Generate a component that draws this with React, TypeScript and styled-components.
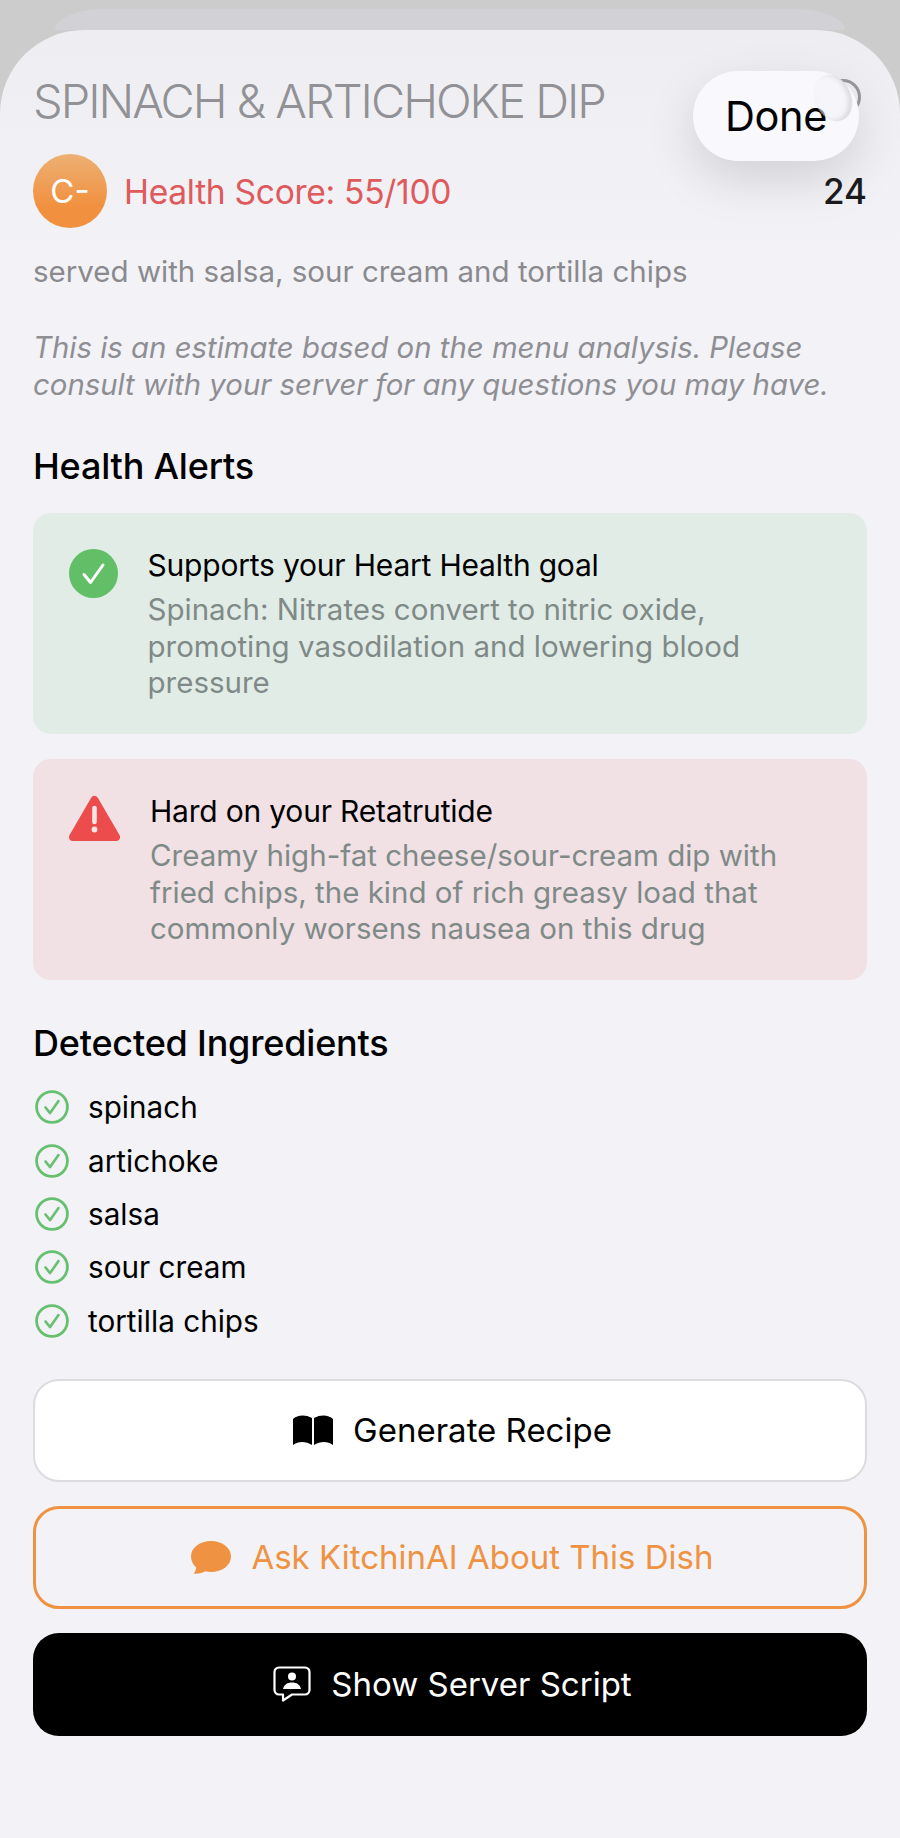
import styled, { createGlobalStyle } from 'styled-components';

const GlobalStyle = createGlobalStyle`
  html, body {
    margin: 0;
    padding: 0;
    background: #f2f2f7;
    font-family: Inter, "Liberation Sans", sans-serif;
  }
`;

const Page = styled.div`
  position: relative;
  width: 900px;
  height: 1838px;
  overflow: hidden;
  padding-top: 9px;
  box-sizing: border-box;
  background: linear-gradient(#cccccc 0, #cccccc 130px, #f2f2f7 131px);
`;

const BackSheet = styled.div`
  height: 21px;
  margin: 0 55px;
  border-radius: 50px 50px 0 0 / 21px 21px 0 0;
  background: #d2d2d6;
`;

const Sheet = styled.div`
  height: 1808px;
  padding: 0 33px;
  box-sizing: border-box;
  border-radius: 84px 84px 0 0;
  background: linear-gradient(#eeeef2, #f2f2f7 240px);
`;

const TitleRow = styled.div`
  display: flex;
  justify-content: space-between;
  padding-top: 44px;
  height: 80px;
`;

const Title = styled.h1`
  margin: 0;
  font-size: 47px;
  line-height: 54px;
  font-weight: 300;
  letter-spacing: -2px;
  white-space: nowrap;
  color: #919196;
`;

const InfoRing = styled.span`
  width: 36px;
  height: 36px;
  margin: 5px 6px 0 0;
  box-sizing: border-box;
  border: 3px solid #98989c;
  border-radius: 50%;
`;

const ScoreRow = styled.div`
  display: flex;
  align-items: center;
  gap: 17px;
  height: 74px;
`;

const Grade = styled.div`
  width: 74px;
  height: 74px;
  border-radius: 50%;
  display: flex;
  align-items: center;
  justify-content: center;
  background: linear-gradient(#edb074, #f19140 70%);
  color: #fff;
  font-size: 33px;
`;

const Score = styled.span`
  flex: 1;
  color: #de5a5c;
  font-size: 33.6px;
  letter-spacing: -0.3px;
`;

const Count = styled.span`
  color: #1c1c1e;
  font-size: 35px;
  font-weight: 500;
`;

const Subtitle = styled.p`
  margin: 24px 0 0;
  color: #8a8a8e;
  font-size: 29.5px;
  line-height: 38px;
`;

const Disclaimer = styled.p`
  margin: 40px 0 0;
  color: #8e8e93;
  font-size: 29.35px;
  line-height: 36.8px;
  font-style: italic;
`;

const SectionTitle = styled.h2`
  margin: 40.5px 0 0;
  color: #000;
  font-size: 36px;
  line-height: 44px;
  font-weight: 500;
  letter-spacing: -0.2px;
`;

const AlertCard = styled.div<{ $tone: 'good' | 'bad' }>`
  display: flex;
  align-items: flex-start;
  height: 221px;
  margin-top: 25px;
  padding: 33px 0 0 36px;
  box-sizing: border-box;
  border-radius: 18px;
  background: ${(p) => (p.$tone === 'good' ? '#e2ece6' : '#f1e0e4')};
`;

const AlertIcon = styled.svg<{ $gap: number; $top: number }>`
  flex: none;
  margin-top: ${(p) => p.$top}px;
  margin-right: ${(p) => p.$gap}px;
`;

const AlertText = styled.div`
  flex: 1;
  padding-right: 36px;
`;

const AlertTitle = styled.div`
  color: #000;
  font-size: 30px;
  line-height: 38px;
  letter-spacing: -0.2px;
`;

const AlertBody = styled.div`
  margin-top: 7px;
  color: #7f8a88;
  font-size: 29.5px;
  line-height: 36.5px;
`;

const IngredientList = styled.ul`
  list-style: none;
  margin: 16px 0 0;
  padding: 0;
`;

const Ingredient = styled.li`
  display: flex;
  align-items: center;
  gap: 19px;
  height: 53.4px;
  padding-left: 2px;
  color: #000;
  font-size: 29.7px;
`;

const ActionButton = styled.div<{ $variant: 'plain' | 'outline' | 'dark' }>`
  display: flex;
  align-items: center;
  justify-content: center;
  gap: 20px;
  height: 103px;
  margin-top: ${(p) => (p.$variant === 'plain' ? '31px' : '24px')};
  padding-left: 5px;
  box-sizing: border-box;
  border-radius: 26px;
  font-size: 33px;
  ${(p) =>
    p.$variant === 'plain' &&
    'background:#fff;color:#000;border:2px solid #dcdce0;'}
  ${(p) =>
    p.$variant === 'outline' &&
    'background:#f2f2f7;color:#ef9343;border:3px solid #ef9343;'}
  ${(p) => p.$variant === 'dark' && 'background:#000;color:#fff;'}
`;

const DoneButton = styled.div`
  position: absolute;
  left: 693px;
  top: 71px;
  width: 166px;
  height: 90px;
  border-radius: 45px;
  display: flex;
  align-items: center;
  justify-content: center;
  background: #f9f9fd;
  box-shadow: 0 18px 50px rgba(0, 0, 0, 0.13);
  color: #000;
  font-size: 41.5px;
  letter-spacing: -0.4px;
`;

const Glint = styled.span`
  position: absolute;
  right: 8px;
  top: 3px;
  width: 36px;
  height: 48px;
  border-radius: 50%;
  transform: rotate(-24deg);
  box-shadow: inset -3px -2px 5px rgba(190, 190, 198, 0.55);
  background: rgba(244, 244, 248, 0.55);
  filter: blur(0.6px);
`;

const ingredients = ['spinach', 'artichoke', 'salsa', 'sour cream', 'tortilla chips'];

function RingCheck() {
  return (
    <svg width="34" height="34" viewBox="0 0 34 34" fill="none">
      <circle cx="17" cy="17" r="15.4" stroke="#66c06f" strokeWidth="2.8" />
      <path d="M10.5 17.5l4.6 5.6 8.4-12" stroke="#66c06f" strokeWidth="2.6" strokeLinecap="round" strokeLinejoin="round" />
    </svg>
  );
}

export default function App() {
  return (
    <>
      <GlobalStyle />
      <Page>
        <BackSheet />
        <Sheet>
          <TitleRow>
            <Title>SPINACH &amp; ARTICHOKE DIP</Title>
            <InfoRing />
          </TitleRow>
          <ScoreRow>
            <Grade>C-</Grade>
            <Score>Health Score: 55/100</Score>
            <Count>24</Count>
          </ScoreRow>
          <Subtitle>served with salsa, sour cream and tortilla chips</Subtitle>
          <Disclaimer>
            This is an estimate based on the menu analysis. Please consult with your server for any questions you may have.
          </Disclaimer>
          <SectionTitle>Health Alerts</SectionTitle>
          <AlertCard $tone="good">
            <AlertIcon $gap={29.5} $top={3} width="49" height="49" viewBox="0 0 49 49">
              <circle cx="24.5" cy="24.5" r="24.5" fill="#62bf68" />
              <path d="M15 25.500l6.500 8L34 16" fill="none" stroke="#fff" strokeWidth="3" strokeLinecap="round" strokeLinejoin="round" />
            </AlertIcon>
            <AlertText>
              <AlertTitle>Supports your Heart Health goal</AlertTitle>
              <AlertBody>Spinach: Nitrates convert to nitric oxide, promoting vasodilation and lowering blood pressure</AlertBody>
            </AlertText>
          </AlertCard>
          <AlertCard $tone="bad">
            <AlertIcon $gap={30} $top={3} width="51" height="46" viewBox="0 0 51 46">
              <path d="M25.500 5L47 42H4z" fill="#ec4c4c" stroke="#ec4c4c" strokeWidth="8" strokeLinejoin="round" />
              <path d="M25.500 13v14" stroke="#f6e4e6" strokeWidth="4.600" strokeLinecap="round" />
              <circle cx="25.500" cy="34.500" r="2.900" fill="#f6e4e6" />
            </AlertIcon>
            <AlertText>
              <AlertTitle>Hard on your Retatrutide</AlertTitle>
              <AlertBody>Creamy high-fat cheese/sour-cream dip with fried chips, the kind of rich greasy load that commonly worsens nausea on this drug</AlertBody>
            </AlertText>
          </AlertCard>
          <SectionTitle>Detected Ingredients</SectionTitle>
          <IngredientList>
            {ingredients.map((name) => (
              <Ingredient key={name}>
                <RingCheck />
                {name}
              </Ingredient>
            ))}
          </IngredientList>
          <ActionButton $variant="plain">
            <svg width="40" height="32" viewBox="0 0 40 32">
              <path d="M0 5C4 1 12 0 19 4V31C13 27 5 27 0 31Z" fill="#000" />
              <path d="M40 5C36 1 28 0 21 4V31C27 27 35 27 40 31Z" fill="#000" />
            </svg>
            Generate Recipe
          </ActionButton>
          <ActionButton $variant="outline">
            <svg width="40" height="33" viewBox="0 0 40 33">
              <path d="M20 0c11 0 20 6.500 20 15.500S31 31 20 31c-2 0-4-.2-5.800-.7C11.500 32 7 33 2.500 32.500 4 31 5 29 5.200 26.500 2 23.700 0 19.800 0 15.500 0 6.500 9 0 20 0z" fill="#ef9343" />
            </svg>
            Ask KitchinAI About This Dish
          </ActionButton>
          <ActionButton $variant="dark">
            <svg width="38" height="36" viewBox="0 0 38 36" fill="none">
              <path d="M6 1.500h26a4.500 4.500 0 0 1 4.500 4.500v18a4.500 4.500 0 0 1-4.500 4.500H19L10 34.500V28.500H6A4.500 4.500 0 0 1 1.500 24V6A4.500 4.500 0 0 1 6 1.500z" stroke="#fff" strokeWidth="2.200" strokeLinejoin="round" />
              <circle cx="19" cy="10.500" r="4" fill="#fff" />
              <path d="M10 23c1-4.500 4.500-6.500 9-6.500s8 2 9 6.500z" fill="#fff" />
            </svg>
            Show Server Script
          </ActionButton>
        </Sheet>
        <DoneButton>
          Done
          <Glint />
        </DoneButton>
      </Page>
    </>
  );
}
